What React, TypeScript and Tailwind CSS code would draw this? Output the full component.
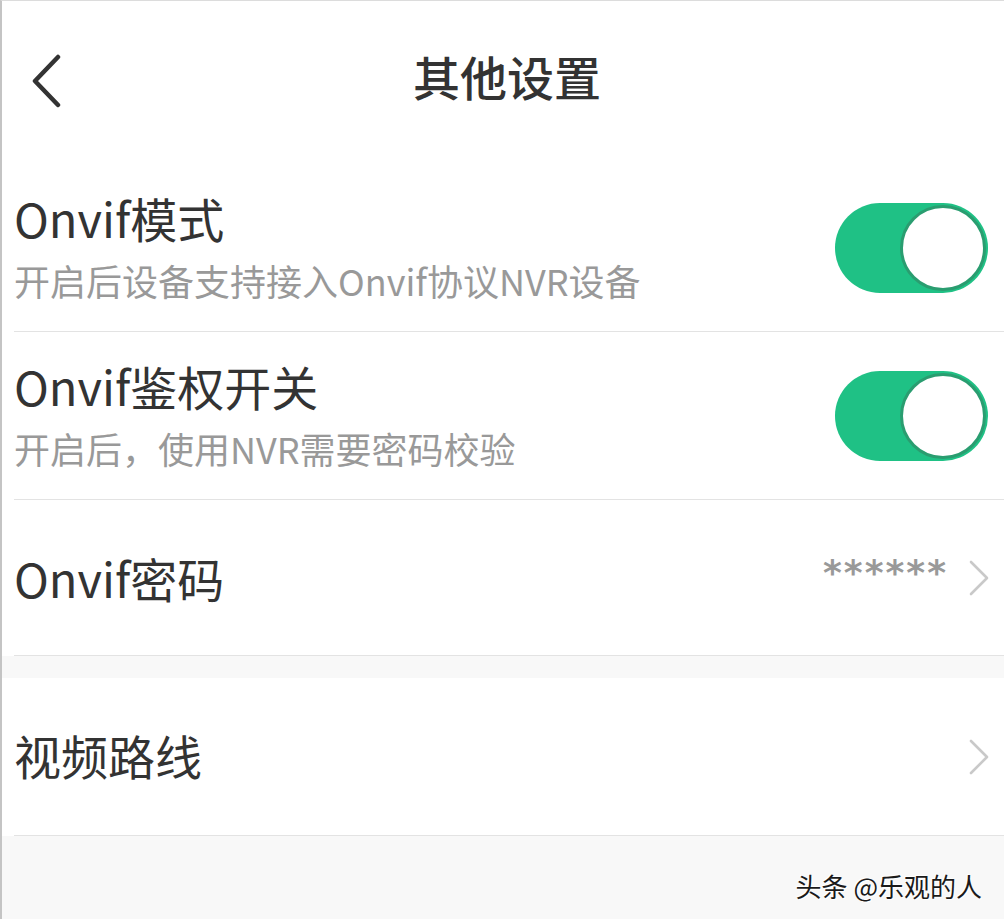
const font = { fontFamily: '"Noto Sans CJK SC", "Noto Sans", sans-serif' }

const BackIcon = () => (
  <svg width="32" height="54" viewBox="0 0 32 54" fill="none">
    <path d="M27 3 L4 27 L27 51" stroke="#333" strokeWidth="4.5" strokeLinecap="round" strokeLinejoin="round" />
  </svg>
)

const ChevronRight = () => (
  <svg width="22" height="38" viewBox="0 0 22 38" fill="none">
    <path d="M3 3 L19 19 L3 35" stroke="#c9c9c9" strokeWidth="2.6" strokeLinecap="round" strokeLinejoin="round" />
  </svg>
)

const Toggle = () => (
  <div className="flex h-[90px] w-[153px] items-center justify-end rounded-full bg-[#1fc185] p-[2px]">
    <div className="h-[86px] w-[86px] rounded-full border-[3px] border-[#2a9d70] bg-white" />
  </div>
)

type SwitchRowProps = { title: string; desc: string }

const SwitchRow = ({ title, desc }: SwitchRowProps) => (
  <div className="bg-white pl-[12px]">
    <div className="flex h-[168px] items-center justify-between border-b border-[#e3e3e3] pr-[16px]">
      <div className="flex flex-col pb-[5px]">
        <span className="text-[47px] leading-[56px] text-[#333]">{title}</span>
        <span className="mt-[13px] text-[36px] leading-[42px] text-[#999]">{desc}</span>
      </div>
      <Toggle />
    </div>
  </div>
)

export default function App() {
  return (
    <div className="min-h-[919px] border-l-2 border-t border-l-[#c4c4c4] border-t-[#dcdcdc] bg-[#f8f8f8]" style={font}>
      <header className="grid h-[163px] grid-cols-[1fr_auto_1fr] items-center bg-white pb-[14px]">
        <div className="pl-[29px] pt-[10px]">
          <BackIcon />
        </div>
        <h1 className="ml-[8px] text-[47px] font-medium leading-none text-[#333]">其他设置</h1>
        <div />
      </header>

      <SwitchRow title="Onvif模式" desc="开启后设备支持接入Onvif协议NVR设备" />
      <SwitchRow title="Onvif鉴权开关" desc="开启后，使用NVR需要密码校验" />

      <div className="bg-white pl-[12px]">
        <div className="flex h-[156px] items-center justify-between border-b border-[#e3e3e3] pr-[14px]">
          <span className="text-[47px] leading-[56px] text-[#333]">Onvif密码</span>
          <div className="flex items-center gap-[20px]">
            <span
              className="mb-[10px] text-[36px] font-bold leading-none tracking-[2px] text-[#999]"
              style={{ fontFamily: '"DejaVu Sans", sans-serif' }}
            >
              ******
            </span>
            <ChevronRight />
          </div>
        </div>
      </div>

      <div className="h-[22px]" />

      <div className="bg-white pl-[12px]">
        <div className="flex h-[158px] items-center justify-between border-b border-[#e3e3e3] pr-[14px]">
          <span className="mb-[4px] text-[47px] leading-[56px] text-[#333]">视频路线</span>
          <ChevronRight />
        </div>
      </div>

      <div className="flex justify-end pr-[22px] pt-[30px]">
        <span className="text-[26px] text-[#1a1a1a] [text-shadow:1px_1px_0_#fff,-1px_-1px_0_#fff]">头条 @乐观的人</span>
      </div>
    </div>
  )
}
